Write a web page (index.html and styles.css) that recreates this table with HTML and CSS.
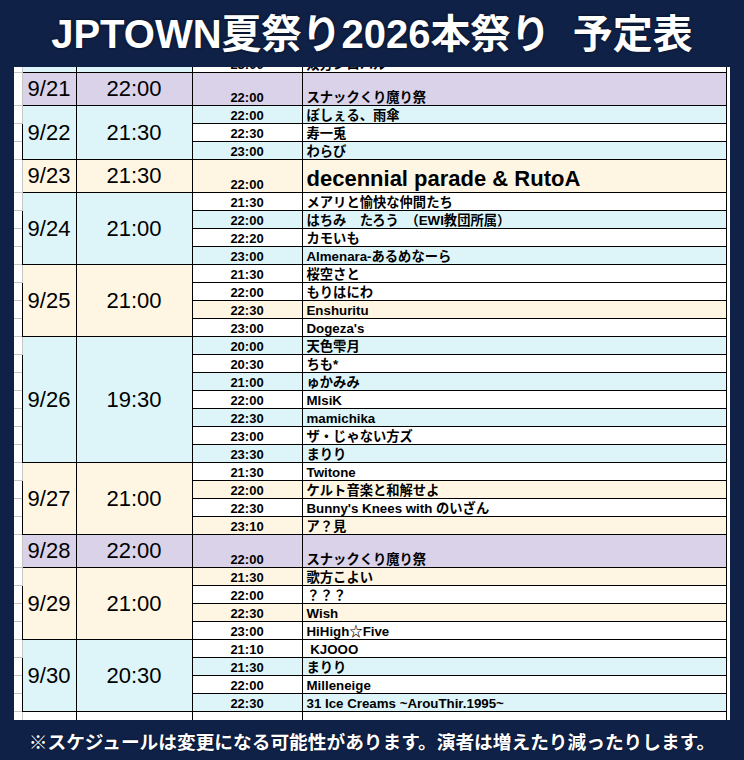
FILE: index.html
```html
<!DOCTYPE html>
<html lang="ja">
<head>
<meta charset="utf-8">
<title>JPTOWN夏祭り2026本祭り 予定表</title>
<link rel="stylesheet" href="styles.css">
</head>
<body>
<header class="title">JPTOWN夏祭り2026本祭り  予定表</header>
<main class="sheet">
<table class="sched">
<colgroup><col class="c-gut"><col class="c-date"><col class="c-start"><col class="c-time"><col class="c-name"></colgroup>
<tbody>
<tr class="s"><td class="gut"></td><td class="cy"></td><td class="cy"></td><td class="t wh">23:00</td><td class="n wh">双方ジロハル</td></tr>

<tr class="d"><td class="gut"></td><td class="date lav">9/21</td><td class="start lav">22:00</td><td class="t lav">22:00</td><td class="n lav">スナックくり魔り祭</td></tr>

<tr class="s"><td class="gut"></td><td class="date cy" rowspan="3">9/22</td><td class="start cy" rowspan="3">21:30</td><td class="t cy">22:00</td><td class="n cy">ぼしぇる、雨傘</td></tr>
<tr class="s"><td class="gut"></td><td class="t wh">22:30</td><td class="n wh">寿一兎</td></tr>
<tr class="s"><td class="gut"></td><td class="t cy">23:00</td><td class="n cy">わらび</td></tr>

<tr class="d"><td class="gut"></td><td class="date cr">9/23</td><td class="start cr">21:30</td><td class="t cr">22:00</td><td class="n cr big">decennial parade &amp; RutoA</td></tr>

<tr class="s"><td class="gut"></td><td class="date cy" rowspan="4">9/24</td><td class="start cy" rowspan="4">21:00</td><td class="t wh">21:30</td><td class="n wh">メアリと愉快な仲間たち</td></tr>
<tr class="s"><td class="gut"></td><td class="t cy">22:00</td><td class="n cy">はちみ　たろう　（EWI教団所属）</td></tr>
<tr class="s"><td class="gut"></td><td class="t wh">22:20</td><td class="n wh">カモいも</td></tr>
<tr class="s"><td class="gut"></td><td class="t cy">23:00</td><td class="n cy">Almenara-あるめなーら</td></tr>

<tr class="s"><td class="gut"></td><td class="date cr" rowspan="4">9/25</td><td class="start cr" rowspan="4">21:00</td><td class="t wh">21:30</td><td class="n wh">桜空さと</td></tr>
<tr class="s"><td class="gut"></td><td class="t wh">22:00</td><td class="n wh">もりはにわ</td></tr>
<tr class="s"><td class="gut"></td><td class="t cr">22:30</td><td class="n cr">Enshuritu</td></tr>
<tr class="s"><td class="gut"></td><td class="t wh">23:00</td><td class="n wh">Dogeza's</td></tr>

<tr class="s"><td class="gut"></td><td class="date cy" rowspan="7">9/26</td><td class="start cy" rowspan="7">19:30</td><td class="t cy">20:00</td><td class="n cy">天色雫月</td></tr>
<tr class="s"><td class="gut"></td><td class="t wh">20:30</td><td class="n wh">ちも*</td></tr>
<tr class="s"><td class="gut"></td><td class="t cy">21:00</td><td class="n cy">ゅかみみ</td></tr>
<tr class="s"><td class="gut"></td><td class="t wh">22:00</td><td class="n wh">MIsiK</td></tr>
<tr class="s"><td class="gut"></td><td class="t cy">22:30</td><td class="n cy">mamichika</td></tr>
<tr class="s"><td class="gut"></td><td class="t wh">23:00</td><td class="n wh">ザ・じゃない方ズ</td></tr>
<tr class="s"><td class="gut"></td><td class="t cy">23:30</td><td class="n cy">まりり</td></tr>

<tr class="s"><td class="gut"></td><td class="date cr" rowspan="4">9/27</td><td class="start cr" rowspan="4">21:00</td><td class="t wh">21:30</td><td class="n wh">Twitone</td></tr>
<tr class="s"><td class="gut"></td><td class="t cr">22:00</td><td class="n cr">ケルト音楽と和解せよ</td></tr>
<tr class="s"><td class="gut"></td><td class="t wh">22:30</td><td class="n wh">Bunny's Knees with のいざん</td></tr>
<tr class="s"><td class="gut"></td><td class="t cr">23:10</td><td class="n cr">ア？見</td></tr>

<tr class="d"><td class="gut"></td><td class="date lav">9/28</td><td class="start lav">22:00</td><td class="t lav">22:00</td><td class="n lav">スナックくり魔り祭</td></tr>

<tr class="s"><td class="gut"></td><td class="date cr" rowspan="4">9/29</td><td class="start cr" rowspan="4">21:00</td><td class="t cr">21:30</td><td class="n cr">歌方こよい</td></tr>
<tr class="s"><td class="gut"></td><td class="t wh">22:00</td><td class="n wh">？？？</td></tr>
<tr class="s"><td class="gut"></td><td class="t cr">22:30</td><td class="n cr">Wish</td></tr>
<tr class="s"><td class="gut"></td><td class="t wh">23:00</td><td class="n wh">HiHigh☆Five</td></tr>

<tr class="s"><td class="gut"></td><td class="date cy" rowspan="4">9/30</td><td class="start cy" rowspan="4">20:30</td><td class="t wh">21:10</td><td class="n wh">&nbsp;KJOOO</td></tr>
<tr class="s"><td class="gut"></td><td class="t cy">21:30</td><td class="n cy">まりり</td></tr>
<tr class="s"><td class="gut"></td><td class="t wh">22:00</td><td class="n wh">Milleneige</td></tr>
<tr class="s"><td class="gut"></td><td class="t cy">22:30</td><td class="n cy">31 Ice Creams ~ArouThir.1995~</td></tr>

<tr class="s"><td class="gut"></td><td class="wh"></td><td class="wh"></td><td class="wh"></td><td class="wh"></td></tr>
</tbody>
</table>
</main>
<footer class="note">※スケジュールは変更になる可能性があります。演者は増えたり減ったりします。</footer>
</body>
</html>
```

FILE: styles.css
```css
html, body {
  margin: 0;
  padding: 0;
}
body {
  width: 744px;
  height: 760px;
  overflow: hidden;
  background: #0f2147;
  font-family: "Liberation Sans", "Noto Sans CJK JP", sans-serif;
  color: #000;
}
.title {
  height: 67px;
  display: flex;
  align-items: center;
  justify-content: center;
  color: #fff;
  font-weight: bold;
  font-size: 40px;
  white-space: pre;
  text-shadow: 0 0 3px rgba(0, 0, 0, 0.7);
  line-height: 1;
  padding-top: 1px;
  box-sizing: border-box;
}
.sheet {
  margin: 0 14px;
  height: 653px;
  background: #fff;
  overflow: hidden;
}
.sched {
  border-collapse: collapse;
  table-layout: fixed;
  width: 712px;
  margin-top: -13px;
}
.c-gut { width: 8px; }
.c-date { width: 54px; }
.c-start { width: 116px; }
.c-time { width: 110px; }
.c-name { width: 424px; }
.sched td {
  border: 1px solid #000;
  padding: 0;
  overflow: hidden;
  white-space: nowrap;
}
.sched td.gut {
  border: 1px solid #c6c6c6;
  border-left: none;
  background: #fff;
}
tr.s { height: 18px; }
tr.d { height: 33px; }
.date, .start {
  font-size: 22px;
  text-align: center;
  vertical-align: middle;
  line-height: 24px;
}
.t {
  font-size: 13px;
  font-weight: bold;
  text-align: center;
  vertical-align: bottom;
  line-height: 15px;
}
.n {
  font-size: 13.3px;
  font-weight: bold;
  text-align: left;
  vertical-align: bottom;
  line-height: 15px;
  padding-left: 4px !important;
}
.n.big {
  font-size: 22px;
  line-height: 24px;
  padding-bottom: 1px !important;
}
.lav { background: #d9d2e9; }
.cy { background: #ddf5f8; }
.cr { background: #fef6e3; }
.wh { background: #fff; }
.note {
  height: 40px;
  display: flex;
  align-items: center;
  justify-content: center;
  color: #fff;
  font-weight: bold;
  font-size: 18.7px;
  white-space: nowrap;
  text-shadow: 0 0 2px rgba(0, 0, 0, 0.6);
}
```
